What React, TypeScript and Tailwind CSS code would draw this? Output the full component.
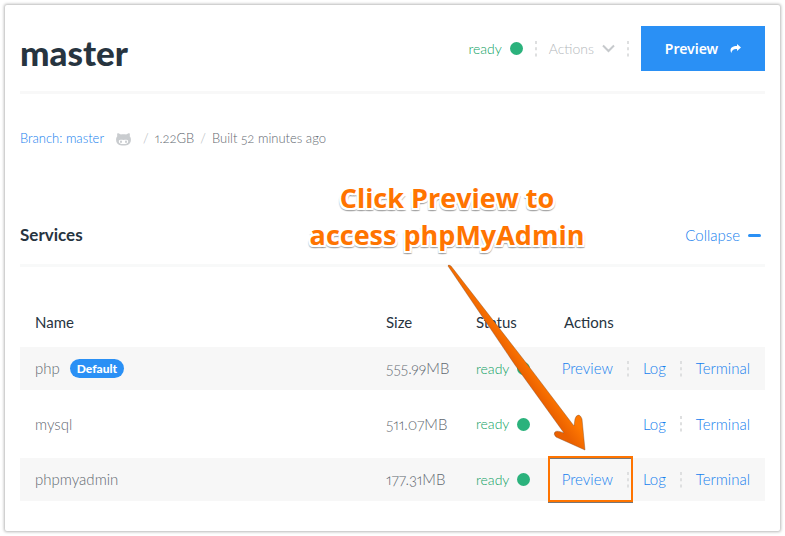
import React from "react";

type Service = { name: string; size: string; preview: boolean; isDefault?: boolean };

const services: Service[] = [
  { name: "php", size: "555.99MB", preview: true, isDefault: true },
  { name: "mysql", size: "511.07MB", preview: false },
  { name: "phpmyadmin", size: "177.31MB", preview: true },
];

function Dots() {
  return (
    <svg width="2" height="16" viewBox="0 0 2 16" aria-hidden="true" className="shrink-0">
      <path d="M1 0V16" stroke="#dedfe0" strokeWidth="2" strokeDasharray="3 3.3" />
    </svg>
  );
}

function Ready() {
  return (
    <span className="flex items-center gap-2 font-light text-[#0f9f64]">
      ready
      <span className="size-[13px] rounded-full bg-[#2bb27c]" />
    </span>
  );
}

function Octocat() {
  return (
    <svg width="15" height="13" viewBox="0 0 15 13" aria-hidden="true">
      <path
        fill="#c9cccf"
        fillRule="evenodd"
        d="M1.4.3C2.6.2 3.800.9 4.800 1.500c1.700-.3 3.700-.3 5.400 0C11.200.9 12.400.2 13.600.3c.4 1 .4 2 .1 2.900.9 1 1.300 2.200 1.200 3.700-.2 4-2.900 5.600-7.400 5.600S.3 10.900.1 6.900C0 5.400.4 4.200 1.300 3.200 1 2.300 1 1.300 1.400.3ZM4.500 6.800C3.200 6.800 2.800 7.500 2.800 8.500c0 1.900 1.800 2.500 4.700 2.500s4.700-.6 4.700-2.500c0-1-.4-1.700-1.700-1.700-1 0-2 .1-3 .1s-2-.1-3-.1Z"
      />
      <ellipse cx="5" cy="8.700" rx="1" ry="1.200" fill="#c9cccf" />
      <ellipse cx="10" cy="8.700" rx="1" ry="1.200" fill="#c9cccf" />
    </svg>
  );
}

function Callout() {
  return (
    <>
      <p className="pointer-events-none absolute top-[179px] left-[297px] w-[300px] text-center font-['Open_Sans','Noto_Sans',sans-serif] text-[27px] leading-[37px] font-bold text-[#ff7400] [text-shadow:2px_0_#fff,-2px_0_#fff,0_2px_#fff,0_-2px_#fff,2px_2px_#fff,-2px_2px_#fff,2px_-2px_#fff,-2px_-2px_#fff,2px_3px_1px_#aaa,-2px_3px_1px_#aaa,0_3px_1px_#888]">
        Click Preview to
        <br />
        access phpMyAdmin
      </p>
      <svg
        className="pointer-events-none absolute top-[260px] left-[440px]"
        width="160"
        height="200"
        viewBox="440 260 160 200"
        aria-hidden="true"
      >
        <defs>
          <linearGradient id="shaft" gradientUnits="userSpaceOnUse" x1="513" y1="364" x2="525" y2="355">
            <stop offset="0" stopColor="#ea6000" />
            <stop offset="1" stopColor="#ff7800" />
          </linearGradient>
        </defs>
        <path
          d="M448 266Q448 264 451 266L527 364L574 426L575 419Q576 415 579 415Q581 416 582 419L585 450L556 437Q553 434 555 432Q557 430 564 433L515 365Z"
          fill="url(#shaft)"
          stroke="#7b4a26"
          strokeWidth=".4"
        />
      </svg>
      <div className="pointer-events-none absolute top-[456px] left-[548px] h-[46px] w-[85px] border-2 border-[#ff7400] shadow-[0_1px_0_#777,inset_0_1px_0_#777]" />
    </>
  );
}

export default function App() {
  return (
    <div className="p-[5px] font-['Lato','Noto_Sans',sans-serif] oldstyle-nums proportional-nums">
      <main className="rounded-xs bg-white px-[15px] pt-[21px] pb-[30px] shadow-[0_0_3px_1px_#b8b8b8]">
        <header className="flex items-center justify-between border-b-3 border-[#f8f8f8] pb-5">
          <h1 className="pt-2 text-[35px] leading-[37px] font-black text-[#27343f]">master</h1>
          <div className="flex items-center gap-3 text-sm">
            <Ready />
            <Dots />
            <button className="flex items-center gap-2 font-light text-[#b4b8bc]">
              Actions
              <svg width="13" height="9" viewBox="0 0 13 9" fill="none" aria-hidden="true">
                <path d="M1 1.500L6.500 7L12 1.500" stroke="#c6c9cc" strokeWidth="2" />
              </svg>
            </button>
            <Dots />
            <button className="flex h-[45px] w-[124px] items-center justify-center gap-3 bg-[#2a90f5] font-['Noto_Sans',sans-serif] font-semibold text-white">
              Preview
              <svg width="11" height="9" viewBox="0 0 11 9" fill="#fff" aria-hidden="true">
                <path d="M7 0L11 3.500L7 7V5C4 4.600 2 5.800 1.300 9C-.8 5 1.500 1.900 7 2Z" />
              </svg>
            </button>
          </div>
        </header>

        <div className="mt-[33px] flex h-6 items-center gap-[6px] text-[13px] font-light text-[#5f6870]">
          <a href="#branch" className="pr-[6px] text-[#1580ee]">Branch: master</a>
          <Octocat />
          <span className="pl-[6px] text-[#b0b4b8]">/</span>
          <span>1.22GB</span>
          <span className="text-[#b0b4b8]">/</span>
          <span>Built 52 minutes ago</span>
        </div>

        <section>
          <div className="mt-[71px] flex items-center justify-between border-b-3 border-[#f8f9f9] pb-4">
            <h2 className="text-[17px] leading-[26px] font-bold text-[#27343f]">Services</h2>
            <button className="flex items-center gap-2 pr-1 text-[15px] font-light text-[#1580ee]">
              Collapse
              <span className="h-[3px] w-[13px] rounded-full bg-[#2a90f5]" />
            </button>
          </div>

          <table className="mt-8 w-full table-fixed text-left text-[15px] text-[#5f6870]">
            <thead className="text-[#27343f]">
              <tr className="h-12 [&>th]:px-[15px] [&>th]:pb-[2px] [&>th]:font-normal">
                <th>Name</th>
                <th className="w-[90px]">Size</th>
                <th className="w-[88px]">Status</th>
                <th className="w-[216px]">Actions</th>
              </tr>
            </thead>
            <tbody className="font-light">
              {services.map((s) => (
                <tr
                  key={s.name}
                  className="h-[43px] odd:bg-[#f7f7f7] even:h-[68px] [&>td]:px-[15px]"
                >
                  <td>
                    <span className="flex items-center gap-[10px]">
                      {s.name}
                      {s.isDefault && (
                        <span className="rounded-full bg-[#2a90f5] px-[7px] text-xs leading-[19px] font-black text-white">
                          Default
                        </span>
                      )}
                    </span>
                  </td>
                  <td>{s.size}</td>
                  <td className="text-sm"><Ready /></td>
                  <td>
                    <span className="flex items-center justify-end gap-[14px] text-[#1580ee]">
                      {s.preview && (
                        <>
                          <a href="#preview">Preview</a>
                          <Dots />
                        </>
                      )}
                      <a href="#log">Log</a>
                      <Dots />
                      <a href="#terminal">Terminal</a>
                    </span>
                  </td>
                </tr>
              ))}
            </tbody>
          </table>
        </section>
      </main>
      <Callout />
    </div>
  );
}
